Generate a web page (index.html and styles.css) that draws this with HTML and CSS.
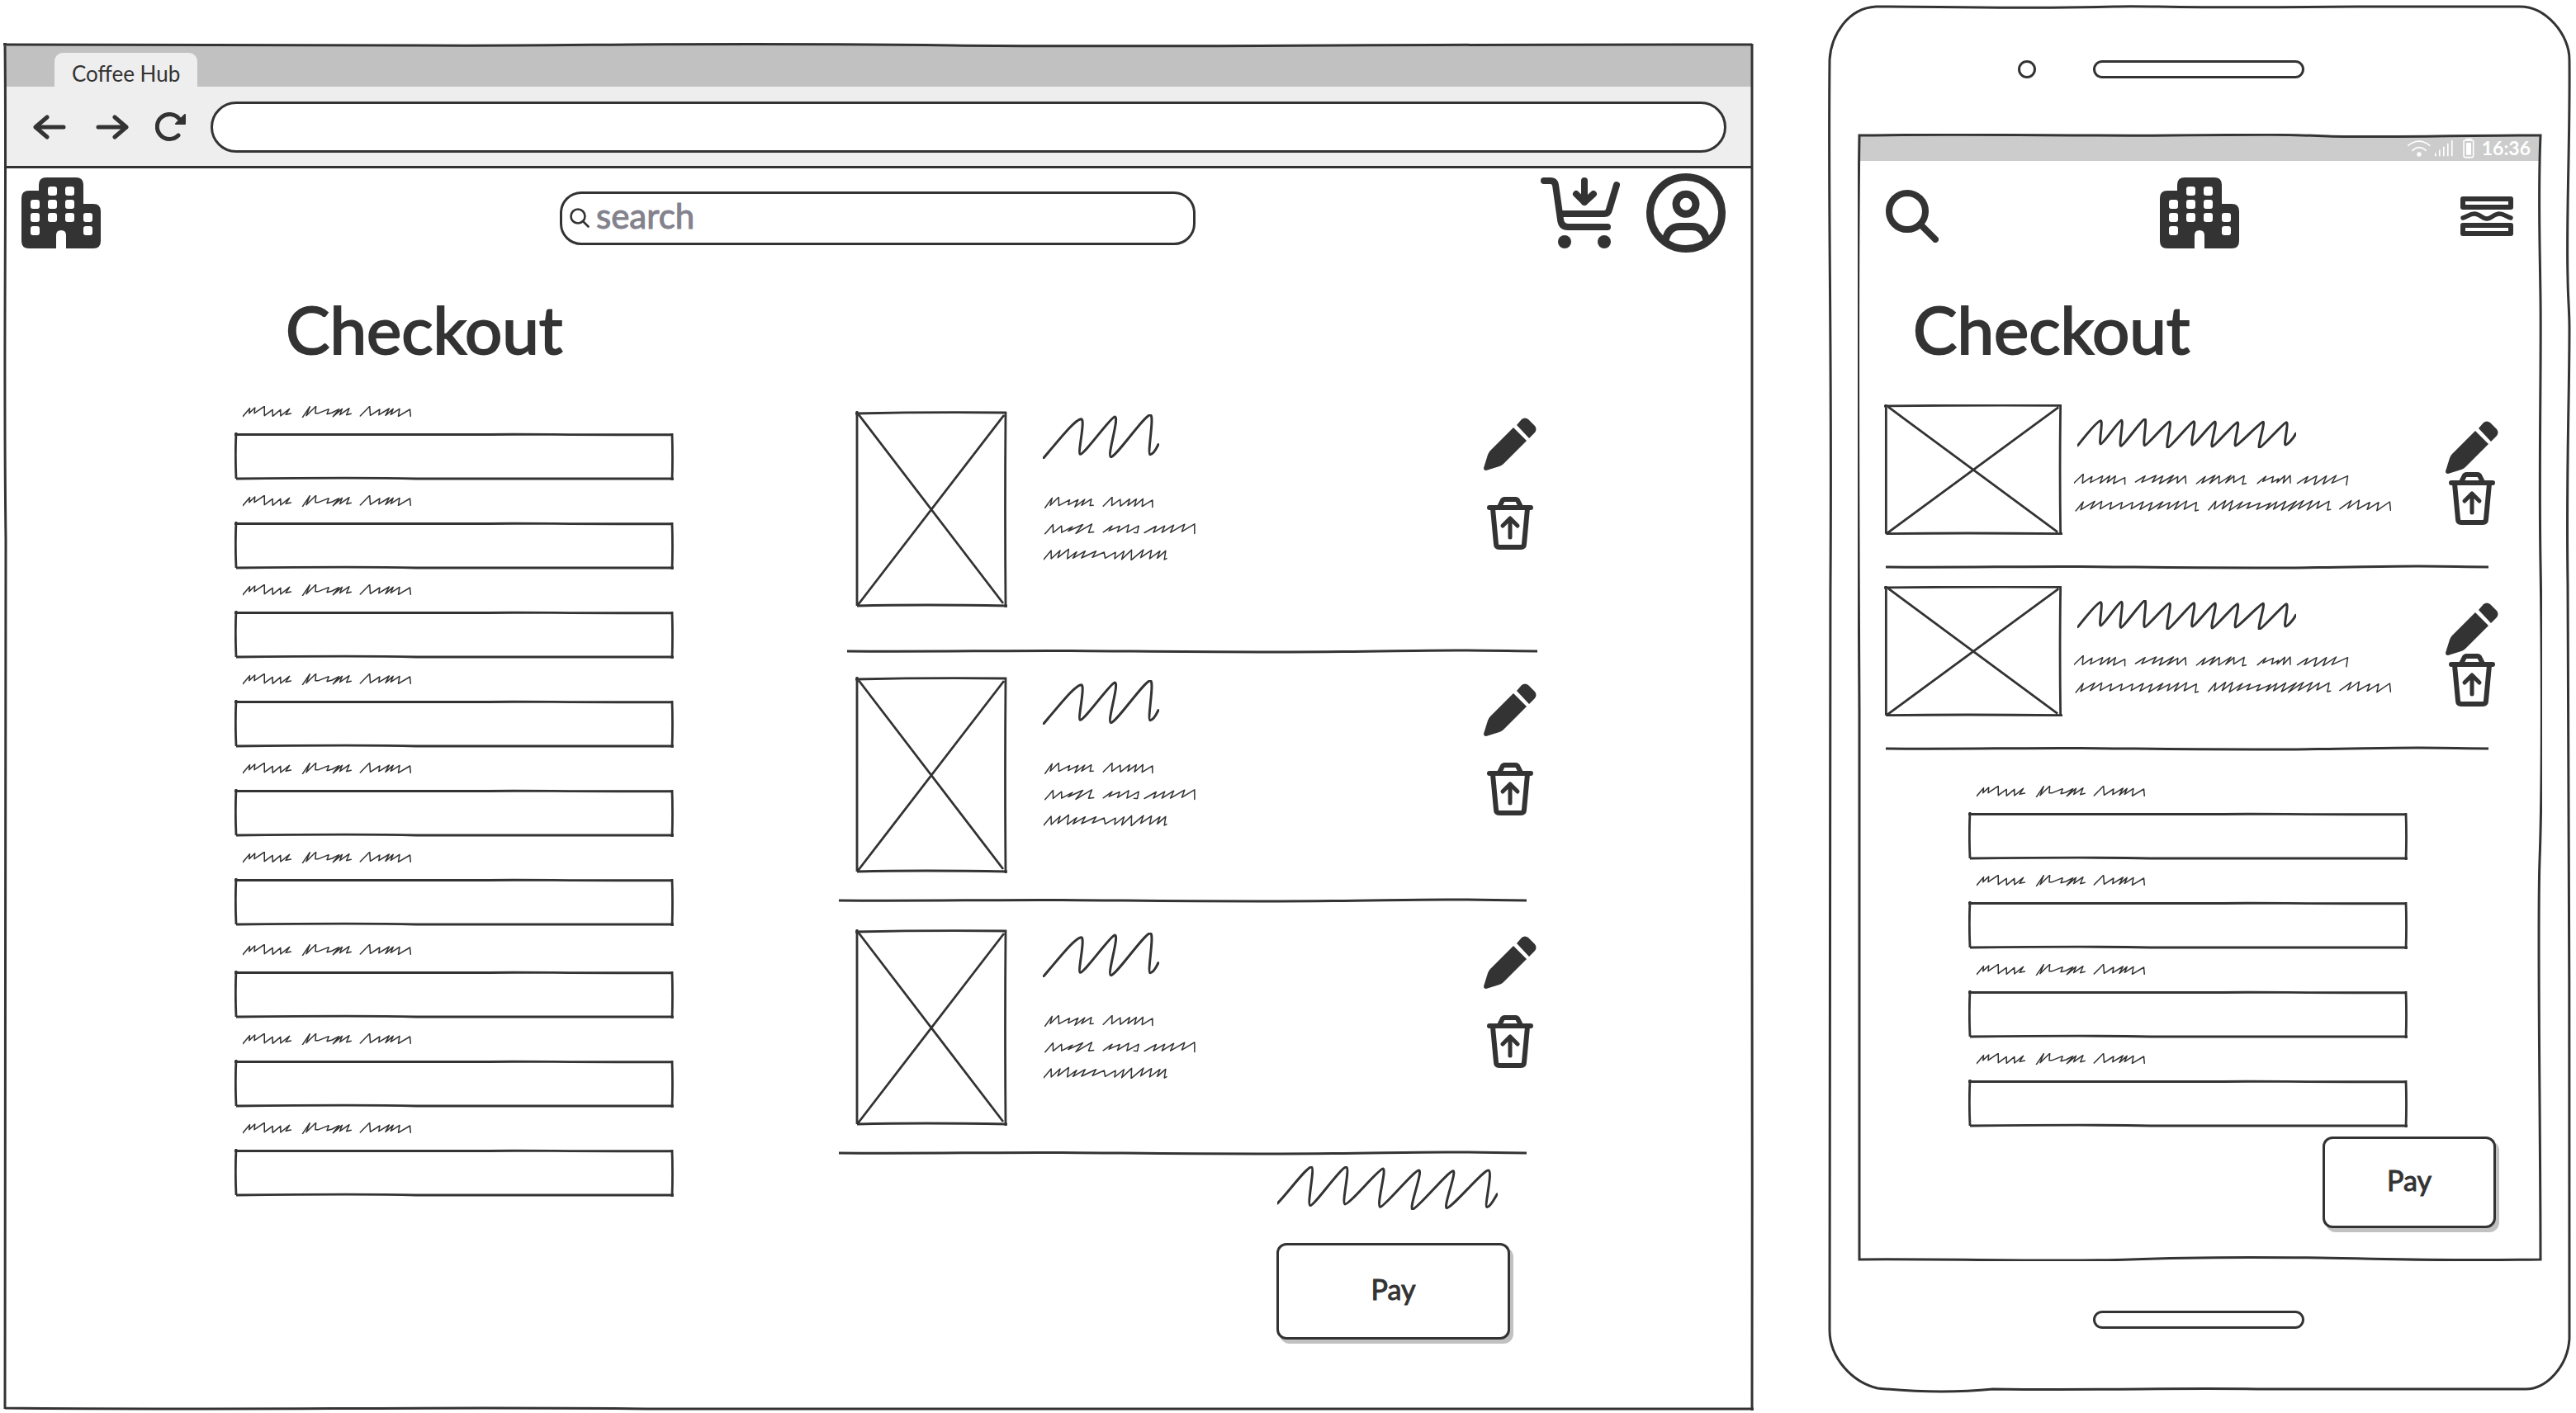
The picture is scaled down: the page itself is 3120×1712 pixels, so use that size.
FILE: index.html
```
<!DOCTYPE html>
<html lang="en">
<head>
<meta charset="utf-8">
<meta name="viewport" content="width=device-width, initial-scale=1">
<title>Coffee Hub – Checkout</title>
<link rel="stylesheet" href="styles.css">
</head>
<body>
<svg class="sprite" aria-hidden="true">
  <symbol id="i-building" viewBox="0 0 96 86">
    <path fill-rule="evenodd" fill="currentColor" stroke="none" d="M30 0H66Q75 0 75 9V32H87Q96 32 96 41V77Q96 86 87 86H54V70Q54 64 48 64T42 70V86H9Q0 86 0 77V25Q0 16 9 16H21V9Q21 0 30 0Z
    M35 11h5q3 0 3 3v5q0 3-3 3h-5q-3 0-3-3v-5q0-3 3-3ZM56 11h5q3 0 3 3v5q0 3-3 3h-5q-3 0-3-3v-5q0-3 3-3Z
    M14 27h5q3 0 3 3v5q0 3-3 3h-5q-3 0-3-3v-5q0-3 3-3ZM35 27h5q3 0 3 3v5q0 3-3 3h-5q-3 0-3-3v-5q0-3 3-3ZM56 27h5q3 0 3 3v5q0 3-3 3h-5q-3 0-3-3v-5q0-3 3-3Z
    M14 43h5q3 0 3 3v5q0 3-3 3h-5q-3 0-3-3v-5q0-3 3-3ZM35 43h5q3 0 3 3v5q0 3-3 3h-5q-3 0-3-3v-5q0-3 3-3ZM56 43h5q3 0 3 3v5q0 3-3 3h-5q-3 0-3-3v-5q0-3 3-3ZM78 43h5q3 0 3 3v5q0 3-3 3h-5q-3 0-3-3v-5q0-3 3-3Z
    M14 59h5q3 0 3 3v5q0 3-3 3h-5q-3 0-3-3v-5q0-3 3-3ZM78 59h5q3 0 3 3v5q0 3-3 3h-5q-3 0-3-3v-5q0-3 3-3Z"/>
  </symbol>
  <symbol id="i-cart" viewBox="0 0 96 96">
    <path stroke-width="8" d="M4 9H12Q17 9 18 14L24 56Q25 65 33 65H81M26 49H77Q82 49 83 44L92 14M53 9V35M43 25L53 35L64 25"/>
    <circle cx="29" cy="83" r="8" fill="currentColor" stroke="none"/><circle cx="77" cy="83" r="8" fill="currentColor" stroke="none"/>
  </symbol>
  <symbol id="i-account" viewBox="0 0 96 96">
    <g stroke-width="9"><circle cx="48" cy="48" r="43.5"/><circle cx="48" cy="37.3" r="12"/><path stroke-linecap="butt" d="M23 82Q26 64.500 41 64.500H55Q70 64.500 73 82"/></g>
  </symbol>
  <symbol id="i-search" viewBox="0 0 64 64"><circle cx="26" cy="26" r="22" stroke-width="8"/><path stroke-width="8" d="M42 42L60 60"/></symbol>
  <symbol id="i-search-thin" viewBox="0 0 24 24"><circle cx="10" cy="10" r="8.500" stroke-width="2.600"/><path stroke-width="2.600" d="M16 16L22.500 22.500"/></symbol>
  <symbol id="i-back" viewBox="0 0 40 30"><path stroke-width="5" d="M3 15H37M17 3L3 15L17 27"/></symbol>
  <symbol id="i-forward" viewBox="0 0 40 30"><path stroke-width="5" d="M37 15H3M23 3L37 15L23 27"/></symbol>
  <symbol id="i-reload" viewBox="0 0 38 36"><path stroke-width="5" d="M28 28A15 15 0 1 1 29 8"/><path fill="currentColor" stroke-width="2" d="M36 3V14H25Z"/></symbol>
  <symbol id="i-pencil" viewBox="0 0 64 64"><path fill="currentColor" stroke="none" d="M40 9L46 2Q50-1 54 2L62 10Q65 14 62 18L55 25ZM36 12L52 28L24 56Q22 58 19 59L3 64Q0 64 0 61L5 45Q6 42 8 40Z"/></symbol>
  <symbol id="i-trash" viewBox="0 0 56 64"><path stroke-width="6" d="M3 13H53M15 12L19 4Q20 3 21 3H35Q36 3 37 4L41 12M7 14L11 57Q11 61 15 61H41Q45 61 45 57L49 14"/><path stroke-width="5" d="M28 49V27M19 35L28 26L37 35"/></symbol>
  <symbol id="i-menu" viewBox="0 0 64 48"><path stroke-width="6" d="M3 3H61V13H3ZM3 35H61V45H3Z"/><path stroke-width="5.500" d="M3 26C8 25 11 21 17 21C23 21 27 27 32 27S41 21 47 21S56 25 61 26"/></symbol>
  <symbol id="i-status" viewBox="45 52 250 75"><path stroke-width="5" d="M50 80Q90 48 129 80M66 98Q90 76 115 98M150 109V117M165 97V117M180 86V117M195 74V117M210 63V117M258 61H284Q288 61 288 66V118Q288 123 283 123H258Q253 123 253 118V66Q253 61 258 61Z"/><circle cx="90" cy="112" r="8" fill="currentColor" stroke="none"/><path fill="currentColor" stroke="none" d="M262 70H280V114H262ZM260 54H282V60H260Z"/></symbol>

  <symbol id="s-label" viewBox="92 66 552 42" preserveAspectRatio="none"><path class="scribble-fine" d="M92 104L115 74L113 92L132 72L130 92L163 67V101L190 79V103L216 79V102L245 76L233 97L250 93M288 107L312 68L300 101L332 67L330 92H340L374 77L368 95L385 90L408 77L388 104L418 76L410 98L441 74L432 98L447 94M477 102L508 67L510 100L541 78L538 98L572 75L560 100L585 76L577 97L606 76L602 103L640 78L642 103"/></symbol>
  <symbol id="s-name" viewBox="457 94 246 162" preserveAspectRatio="none"><path class="scribble" d="M458 254C490 190 525 112 538 111C548 111 530 236 536 239C545 240 600 105 609 103C620 103 592 245 601 249C612 249 672 96 684 96C694 96 677 238 684 240C690 240 698 215 701 204"/></symbol>
  <symbol id="s-text" viewBox="460 396 321 232" preserveAspectRatio="none"><path class="scribble-fine" d="M463 436L478 400L474 427L492 397V428L515 407L512 425L533 406L526 433L547 405L540 427L561 404L558 428L565 427M586 430L605 397L604 428L622 405V430L642 404L638 427L656 404L652 430L670 403L668 431L690 408V434
  M463 531L480 497V527L498 502V526L521 505L512 521L543 497L528 530L562 495L555 526L566 524M586 525L605 502L598 520L621 503L616 524L640 498L636 526L661 502L658 527L651 526M673 527L698 503L692 526L716 502L710 526L735 499L728 526L758 496L752 523L779 495V530
  M460 625L476 592V622L495 592L490 618L513 587L510 622L530 597L522 620L548 594L540 619L571 594L563 617L588 598L590 620L612 598L610 622L630 594L625 624L646 590L645 627L671 589L665 618L688 591L684 622L706 594L700 620L718 593L715 625L720 621"/></symbol>
  <symbol id="s-total" viewBox="82 99 800 157" preserveAspectRatio="none"><path class="scribble" d="M83 232C120 195 190 100 206 102C220 105 188 238 202 240C215 242 315 100 332 102C348 105 314 232 328 235C345 236 450 108 466 108C480 110 440 240 456 245C470 246 580 112 596 114C612 117 558 250 573 254C590 252 705 114 720 116C735 118 683 246 697 249C715 250 830 112 848 114C866 116 832 244 843 246C855 246 870 215 880 199"/></symbol>
  <symbol id="s-name-wide" viewBox="477 110 496 108" preserveAspectRatio="none"><path class="scribble" d="M478 208C492 180 522 118 530 118C536 118 525 203 530 203C536 203 571 117 577 117C583 117 570 210 576 210C582 210 624 112 630 112C636 112 624 208 630 208C636 208 680 122 686 122C692 122 676 216 682 216C688 216 735 121 741 121C747 121 732 206 738 206C744 206 783 122 789 122C795 122 777 212 783 212C789 212 834 124 840 124C846 124 830 209 836 209C842 209 892 123 898 123C904 123 884 216 890 216C896 216 945 124 951 124C957 124 944 206 949 206C954 206 968 180 972 165"/></symbol>
  <symbol id="s-text-wide" viewBox="471 312 717 138" preserveAspectRatio="none"><path class="scribble-fine" d="M471 346L492 313L490 346L512 322L508 344L536 320L530 346L552 320L546 344L565 320L560 348L586 326V350M610 342L632 320L624 343L657 318L648 343L672 320L664 348L696 318L682 347L706 322L704 346L723 320L724 347M748 348L768 322L760 346L790 318L778 347L800 320L798 348L826 318L814 345L833 320L832 344L856 319L852 350L860 347M886 347L905 321L898 340L922 322L918 344L934 330L930 344L948 319L944 346L960 318V346M976 347L1000 322L992 346L1020 320L1014 352L1042 320L1034 350L1064 318L1054 346L1090 320L1087 353
  M475 447L492 414L486 443L518 412L508 440L534 412L530 440L556 416L552 441L580 416L576 440L604 416L600 440L628 414L620 442L648 416L640 446L672 414L660 440L688 416L682 441L708 412L698 442L726 411L720 441L748 416L745 447L752 444M775 444L792 412L788 441L814 410L806 440L830 410L822 446L852 414L840 440L870 416L862 438L892 418L884 441L916 418L905 442L930 414L922 441L950 412L940 444L974 412L956 446L990 410L978 440L1010 410L998 444L1026 412L1020 438L1048 412L1044 444L1051 442M1072 440L1098 410L1090 438L1116 408L1112 441L1140 416L1134 442L1160 416L1156 446L1185 414L1187 445"/></symbol>
</svg>

<div class="board">
  <section class="browser" aria-label="Desktop checkout">
    <div class="tabs"><div class="tab">Coffee Hub</div></div>
    <div class="toolbar">
      <button class="icon-button back" type="button" aria-label="Back"><svg class="arrow"><use href="#i-back"/></svg></button>
      <button class="icon-button forward" type="button" aria-label="Forward"><svg class="arrow"><use href="#i-forward"/></svg></button>
      <button class="icon-button" type="button" aria-label="Reload"><svg class="reload"><use href="#i-reload"/></svg></button>
      <input class="address" type="text" aria-label="Address">
    </div>

    <header class="site-header">
      <a class="logo" href="#" aria-label="Home"><svg class="building"><use href="#i-building"/></svg></a>
      <div class="search">
        <svg class="search-icon"><use href="#i-search-thin"/></svg>
        <input class="search-input" type="text" placeholder="search" aria-label="Search">
      </div>
      <nav class="account-nav">
        <a class="icon-link" href="#" aria-label="Cart"><svg class="large-icon"><use href="#i-cart"/></svg></a>
        <a class="icon-link" href="#" aria-label="Account"><svg class="large-icon"><use href="#i-account"/></svg></a>
      </nav>
    </header>

    <main class="checkout">
      <form class="details">
        <h1 class="title">Checkout</h1>
        <div class="fields">
          <label class="field"><svg class="field-label"><use href="#s-label"/></svg><input class="field-input" type="text" aria-label="Field 1"></label>
          <label class="field"><svg class="field-label"><use href="#s-label"/></svg><input class="field-input" type="text" aria-label="Field 2"></label>
          <label class="field"><svg class="field-label"><use href="#s-label"/></svg><input class="field-input" type="text" aria-label="Field 3"></label>
          <label class="field"><svg class="field-label"><use href="#s-label"/></svg><input class="field-input" type="text" aria-label="Field 4"></label>
          <label class="field"><svg class="field-label"><use href="#s-label"/></svg><input class="field-input" type="text" aria-label="Field 5"></label>
          <label class="field"><svg class="field-label"><use href="#s-label"/></svg><input class="field-input" type="text" aria-label="Field 6"></label>
        </div>
        <div class="fields fields-second">
          <label class="field"><svg class="field-label"><use href="#s-label"/></svg><input class="field-input" type="text" aria-label="Field 7"></label>
          <label class="field"><svg class="field-label"><use href="#s-label"/></svg><input class="field-input" type="text" aria-label="Field 8"></label>
          <label class="field"><svg class="field-label"><use href="#s-label"/></svg><input class="field-input" type="text" aria-label="Field 9"></label>
        </div>
      </form>

      <section class="order" aria-label="Order">
        <article class="item">
          <div class="thumb"></div>
          <div class="item-body"><svg class="item-name"><use href="#s-name"/></svg><svg class="item-text"><use href="#s-text"/></svg></div>
          <div class="item-actions">
            <button class="icon-button" type="button" aria-label="Edit"><svg class="pencil"><use href="#i-pencil"/></svg></button>
            <button class="icon-button" type="button" aria-label="Remove"><svg class="trash"><use href="#i-trash"/></svg></button>
          </div>
        </article>
        <hr class="rule rule-first">
        <article class="item">
          <div class="thumb"></div>
          <div class="item-body"><svg class="item-name"><use href="#s-name"/></svg><svg class="item-text"><use href="#s-text"/></svg></div>
          <div class="item-actions">
            <button class="icon-button" type="button" aria-label="Edit"><svg class="pencil"><use href="#i-pencil"/></svg></button>
            <button class="icon-button" type="button" aria-label="Remove"><svg class="trash"><use href="#i-trash"/></svg></button>
          </div>
        </article>
        <hr class="rule">
        <article class="item">
          <div class="thumb"></div>
          <div class="item-body"><svg class="item-name"><use href="#s-name"/></svg><svg class="item-text"><use href="#s-text"/></svg></div>
          <div class="item-actions">
            <button class="icon-button" type="button" aria-label="Edit"><svg class="pencil"><use href="#i-pencil"/></svg></button>
            <button class="icon-button" type="button" aria-label="Remove"><svg class="trash"><use href="#i-trash"/></svg></button>
          </div>
        </article>
        <hr class="rule rule-last">
        <div class="summary">
          <svg class="total"><use href="#s-total"/></svg>
          <button class="pay" type="button">Pay</button>
        </div>
      </section>
    </main>
  </section>

  <section class="phone" aria-label="Mobile checkout">
    <div class="phone-top"><span class="camera"></span><span class="speaker"></span></div>
    <div class="screen">
      <div class="status-bar"><svg class="status-icons"><use href="#i-status"/></svg><span>16:36</span></div>
      <header class="phone-header">
        <button class="icon-button phone-tool" type="button" aria-label="Search"><svg class="pencil"><use href="#i-search"/></svg></button>
        <a class="icon-link" href="#" aria-label="Home"><svg class="building"><use href="#i-building"/></svg></a>
        <button class="icon-button phone-tool" type="button" aria-label="Menu"><svg class="menu"><use href="#i-menu"/></svg></button>
      </header>
      <h1 class="title phone-title">Checkout</h1>
      <div class="phone-order">
        <article class="item phone-item">
          <div class="thumb thumb-wide"></div>
          <div class="item-body"><svg class="item-name"><use href="#s-name-wide"/></svg><svg class="item-text"><use href="#s-text-wide"/></svg></div>
          <div class="item-actions">
            <button class="icon-button" type="button" aria-label="Edit"><svg class="pencil"><use href="#i-pencil"/></svg></button>
            <button class="icon-button" type="button" aria-label="Remove"><svg class="trash"><use href="#i-trash"/></svg></button>
          </div>
        </article>
        <hr class="rule phone-rule">
        <article class="item phone-item">
          <div class="thumb thumb-wide"></div>
          <div class="item-body"><svg class="item-name"><use href="#s-name-wide"/></svg><svg class="item-text"><use href="#s-text-wide"/></svg></div>
          <div class="item-actions">
            <button class="icon-button" type="button" aria-label="Edit"><svg class="pencil"><use href="#i-pencil"/></svg></button>
            <button class="icon-button" type="button" aria-label="Remove"><svg class="trash"><use href="#i-trash"/></svg></button>
          </div>
        </article>
        <hr class="rule phone-rule">
      </div>
      <form class="phone-form">
        <div class="fields">
          <label class="field"><svg class="field-label"><use href="#s-label"/></svg><input class="field-input" type="text" aria-label="Field 1"></label>
          <label class="field"><svg class="field-label"><use href="#s-label"/></svg><input class="field-input" type="text" aria-label="Field 2"></label>
          <label class="field"><svg class="field-label"><use href="#s-label"/></svg><input class="field-input" type="text" aria-label="Field 3"></label>
          <label class="field"><svg class="field-label"><use href="#s-label"/></svg><input class="field-input" type="text" aria-label="Field 4"></label>
        </div>
      </form>
      <button class="pay phone-pay" type="button">Pay</button>
    </div>
    <div class="phone-bottom"><span class="speaker"></span></div>
  </section>
</div>
</body>
</html>
```
FILE: styles.css
```
:root {
  --ink: #333;
  --strip: #c1c1c1;
  --bar: #eee;
}

*, *::before, *::after { box-sizing: border-box; }

body {
  margin: 0;
  background: #fff;
  color: var(--ink);
  font-family: Lato, "Liberation Sans", sans-serif;
}

svg {
  display: block;
  flex: none;
  fill: none;
  stroke: currentColor;
  stroke-linecap: round;
  stroke-linejoin: round;
}

.sprite { position: absolute; width: 0; height: 0; }
.scribble { stroke-width: 3px; vector-effect: non-scaling-stroke; }
.scribble-fine { stroke-width: 1.5; vector-effect: non-scaling-stroke; }

.icon-button {
  display: block;
  padding: 0;
  border: 0;
  background: none;
  color: inherit;
  cursor: pointer;
}

.icon-link { display: block; color: inherit; }

.board {
  display: grid;
  grid-template-columns: minmax(0, 2120fr) minmax(0, 900fr);
  gap: 90px;
  align-items: start;
  padding: 6px 6px 0 4px;
}

/* Browser window */

.browser {
  position: relative;
  margin-top: 46px;
  padding: 2px 2px 86px;
}

.browser::after,
.phone::after,
.screen::after {
  content: "";
  position: absolute;
  inset: 0;
  background-size: 100% 100%;
  pointer-events: none;
}

.browser::after {
  background-image: url("data:image/svg+xml,%3Csvg xmlns='http://www.w3.org/2000/svg' viewBox='0 0 2120 1655' preserveAspectRatio='none' fill='none' stroke='%23333' stroke-width='3'%3E%3Cpath vector-effect='non-scaling-stroke' d='M2 0C4 200 0 380 3 600S1 1200 2 1653M0 2C300 1 450 4 620 3S900 0 1150 3S1700 1 2118 2M2118 1C2120 400 2116 700 2118 1000S2117 1400 2118 1655M2 1652C300 1655 500 1650 800 1653S1500 1651 2120 1653'/%3E%3C/svg%3E");
}

.tabs {
  display: flex;
  align-items: flex-end;
  height: 51px;
  padding-left: 60px;
  background: var(--strip);
}

.tab {
  padding: 10px 21px 0;
  border-radius: 10px 10px 0 0;
  background: var(--bar);
  font-size: 26px;
  line-height: 31px;
}

.toolbar {
  display: flex;
  align-items: center;
  height: 99px;
  padding: 2px 31px 0 34px;
  border-bottom: 3px solid var(--ink);
  background: var(--bar);
}

.arrow { width: 40px; height: 30px; }
.back { margin-right: 36px; }
.forward { margin-right: 32px; }
.reload { width: 38px; height: 36px; }

.address {
  flex: 1;
  min-width: 0;
  height: 62px;
  margin-left: 29px;
  padding: 0 30px;
  border: 3px solid var(--ink);
  border-radius: 31px;
  background: #fff;
  font: inherit;
  font-size: 26px;
}

.site-header {
  display: grid;
  grid-template-columns: 672fr 770fr 674fr;
  align-items: center;
  padding-top: 6px;
}

.logo { padding-left: 20px; color: inherit; }
.building { width: 96px; height: 86px; }

.search {
  display: flex;
  align-items: center;
  gap: 8px;
  height: 65px;
  margin-top: 12px;
  padding: 0 9px;
  border: 3px solid var(--ink);
  border-radius: 26px;
}

.search-icon { width: 24px; height: 24px; }

.search-input {
  flex: 1;
  min-width: 0;
  height: 54px;
  padding: 0 0 6px;
  border: 0;
  background: none;
  font: inherit;
  font-size: 42px;
}

.search-input::placeholder {
  color: #83828d;
  opacity: 1;
  -webkit-text-stroke: 1px #83828d;
}

.account-nav {
  display: flex;
  justify-content: flex-end;
  gap: 32px;
  padding-right: 32px;
}

.large-icon { width: 96px; height: 96px; }

.checkout {
  display: grid;
  grid-template-columns: 278fr minmax(0, 532fr) 220fr minmax(0, 826fr) 260fr;
  padding-top: 52px;
}

.details { grid-column: 2; }

.title {
  margin: 0;
  padding-left: 62px;
  font-size: 80px;
  font-weight: 400;
  line-height: 80px;
  -webkit-text-stroke: 2px var(--ink);
}

.fields { display: grid; gap: 18px; margin-top: 54px; }
.fields-second { margin-top: 22px; }
.field { display: grid; gap: 18px; }
.field-label { width: 204px; height: 14px; margin-left: 10px; }

.field-input {
  width: 100%;
  height: 58px;
  padding: 0 16px;
  border: 0;
  background: url("data:image/svg+xml,%3Csvg xmlns='http://www.w3.org/2000/svg' viewBox='0 0 532 58' preserveAspectRatio='none' fill='none' stroke='%23333' stroke-width='2.800'%3E%3Cpath vector-effect='non-scaling-stroke' d='M2 0C1 20 1 34 2 56M0 2.500H300C360 1.500 410 3.500 530 2.500M530 1Q531 30 530 58M2 56C100 55 180 55 220 56H532'/%3E%3C/svg%3E") 0 0 / 100% 100% no-repeat;
  font: inherit;
  font-size: 26px;
}

/* Order */

.order { grid-column: 4; padding-top: 140px; }

.item {
  display: grid;
  grid-template-columns: 184px minmax(0, 1fr) 66px;
}

.thumb {
  height: 238px;
  background: url("data:image/svg+xml,%3Csvg xmlns='http://www.w3.org/2000/svg' viewBox='0 0 184 238' preserveAspectRatio='none' fill='none' stroke='%23333' stroke-width='2.800'%3E%3Cpath vector-effect='non-scaling-stroke' d='M2 0V236M0 3Q90 1 183 2M182 1Q181 120 182 238M2 236Q80 234 184 236M3 3L179 233M180 5L3 235'/%3E%3C/svg%3E") 0 0 / 100% 100% no-repeat;
}

.item-body { padding: 4px 0 0 43px; }
.item-name { width: 141px; height: 54px; }
.item-text { width: 184px; height: 77px; margin: 46px 0 0 1px; }

.item-actions {
  display: grid;
  align-content: start;
  justify-items: center;
  gap: 32px;
  padding-top: 8px;
}

.pencil { width: 64px; height: 64px; }
.trash { width: 56px; height: 64px; }

.rule {
  height: 6px;
  margin: 30px 13px 32px -20px;
  border: 0;
  background: url("data:image/svg+xml,%3Csvg xmlns='http://www.w3.org/2000/svg' viewBox='0 0 836 6' preserveAspectRatio='none' fill='none' stroke='%23333' stroke-width='3'%3E%3Cpath vector-effect='non-scaling-stroke' d='M0 3C100 4 180 2 270 2.500S480 5 600 3.500S720 1 836 3'/%3E%3C/svg%3E") 0 0 / 100% 100% no-repeat;
}

.rule-first { margin: 50px 0 28px -10px; }
.rule-last { margin-bottom: 13px; }

.summary {
  display: grid;
  justify-items: end;
  gap: 40px;
  padding-right: 33px;
}

.total { width: 267px; height: 53px; margin-right: 15px; }

.pay {
  width: 283px;
  height: 117px;
  padding: 0 0 6px;
  border: 3px solid var(--ink);
  border-radius: 12px;
  background: #fff;
  box-shadow: 4px 5px 0 var(--strip);
  color: inherit;
  font: inherit;
  font-size: 34px;
  -webkit-text-stroke: 1px var(--ink);
}

/* Phone */

.phone { position: relative; }

.phone::after {
  background-image: url("data:image/svg+xml,%3Csvg xmlns='http://www.w3.org/2000/svg' viewBox='0 0 900 1678' preserveAspectRatio='none' fill='none' stroke='%23333' stroke-width='3'%3E%3Cpath vector-effect='non-scaling-stroke' d='M58 2C150 2 210 4 290 3S340 1 400 2S560 3 640 2H838C870 2 898 36 898 66C899 160 894 260 896 330C896 350 898 370 898 390C898 480 894 560 896 700S898 1400 898 1612C896 1646 870 1673 845 1673H520C420 1671 340 1675 200 1673C150 1678 100 1676 60 1672C30 1665 2 1636 2 1602C3 1300 1 1000 3 700S0 260 2 66C4 36 24 4 58 2Z'/%3E%3C/svg%3E");
}

.phone-top,
.phone-bottom {
  display: grid;
  grid-template-columns: 1fr 256px 1fr;
  align-items: center;
  height: 156px;
  padding-right: 2px;
}

.phone-bottom { height: 160px; padding-bottom: 18px; }

.camera {
  justify-self: end;
  width: 22px;
  height: 22px;
  margin-right: 69px;
  border: 3px solid var(--ink);
  border-radius: 50%;
}

.speaker {
  grid-column: 2;
  height: 22px;
  border: 3px solid var(--ink);
  border-radius: 11px;
}

.screen {
  position: relative;
  margin: 0 35px 0 36px;
  padding: 2px 2px 40px;
}

.screen::after {
  background-image: url("data:image/svg+xml,%3Csvg xmlns='http://www.w3.org/2000/svg' viewBox='0 0 829 1366' preserveAspectRatio='none' fill='none' stroke='%23333' stroke-width='3'%3E%3Cpath vector-effect='non-scaling-stroke' d='M2 2C150 0 260 3 380 2S520 1 570 3S720 2 827 2C824 70 826 120 827 200S825 400 827 520S829 800 826 880S827 1200 827 1364C700 1366 640 1363 560 1362S400 1361 330 1364S100 1363 2 1364C1 1100 3 900 2 700S-1 200 2 2Z'/%3E%3C/svg%3E");
}

.status-bar {
  display: flex;
  align-items: center;
  justify-content: flex-end;
  gap: 8px;
  height: 31px;
  padding: 0 12px 0 0;
  background: #ccc;
  color: #fff;
  font-size: 23px;
  font-weight: 700;
  line-height: 31px;
}

.status-icons { width: 83px; height: 25px; }

.phone-header {
  display: flex;
  align-items: center;
  justify-content: space-between;
  padding: 20px 33px 0 32px;
}

.phone-tool { margin-top: 8px; }
.menu { width: 64px; height: 48px; }
.phone-title { margin-top: 57px; padding-left: 65px; }
.phone-order { padding: 52px 51px 0 30px; }
.phone-item { grid-template-columns: 216px minmax(0, 1fr) 64px; }
.thumb-wide { height: 158px; }

.phone-item .item-body { padding: 17px 0 0 18px; }
.phone-item .item-name { width: 265px; height: 36px; }
.phone-item .item-text { width: 384px; height: 46px; margin: 31px 0 0 -4px; }
.phone-item .item-actions { gap: 0; padding-top: 20px; }
.phone-item .trash { margin-top: -2px; }

.phone-rule { margin: 36px 12px 20px 2px; }

.phone-form { padding: 0 19.5% 0 16%; }
.phone-form .fields { margin-top: 42px; }

.phone-pay {
  display: block;
  width: 210px;
  height: 111px;
  margin: 11px 54px 0 auto;
}
```
